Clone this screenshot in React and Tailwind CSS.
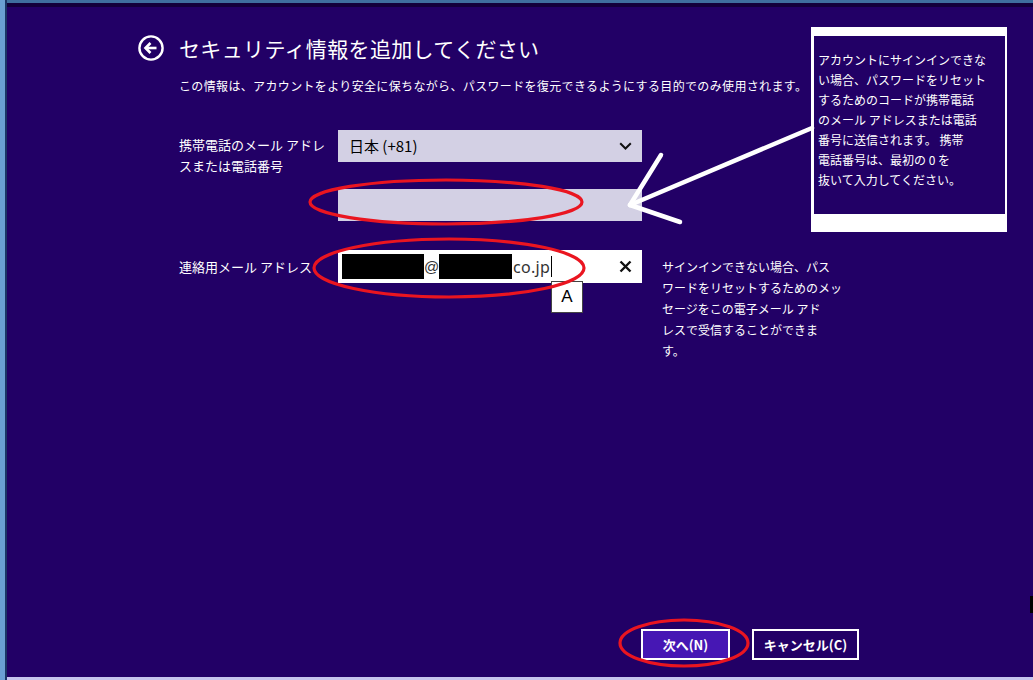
import React from 'react';

const HELP_CALLOUT = [
  'アカウントにサインインできな',
  'い場合、パスワードをリセット',
  'するためのコードが携帯電話',
  'のメール アドレスまたは電話',
  '番号に送信されます。 携帯',
  '電話番号は、最初の 0 を',
  '抜いて入力してください。',
];

const HELP_EMAIL = [
  'サインインできない場合、パス',
  'ワードをリセットするためのメッ',
  'セージをこの電子メール アド',
  'レスで受信することができま',
  'す。',
];

function BackIcon() {
  return (
    <svg width="26" height="26" viewBox="0 0 26 26" fill="none">
      <circle cx="13" cy="13" r="11.6" stroke="white" strokeWidth="2.4" />
      <path d="M7.5 13h11" stroke="white" strokeWidth="2.6" />
      <path d="M12.5 8l-5 5 5 5" stroke="white" strokeWidth="2.6" />
    </svg>
  );
}

function Annotations() {
  return (
    <svg
      className="pointer-events-none absolute left-0 top-0"
      width="1033"
      height="680"
      viewBox="0 0 1033 680"
      fill="none"
    >
      {/* white arrow pointing from the callout to the phone field */}
      <g stroke="white" strokeWidth="4.5" strokeLinecap="round">
        <path d="M812 128 L630 205" />
        <path d="M630 205 L661 155" />
        <path d="M630 205 L680 222" />
      </g>
      {/* red marker circles */}
      <g stroke="#ea1520" strokeWidth="3.2">
        <ellipse cx="446" cy="202" rx="136" ry="22" />
        <ellipse cx="449" cy="268" rx="135" ry="29" />
        <ellipse cx="684" cy="643" rx="64" ry="23" />
      </g>
    </svg>
  );
}

export default function App() {
  return (
    <div className="relative flex h-[680px] w-[1033px] overflow-hidden bg-[#220066] font-['Noto_Sans_CJK_JP','Noto_Sans',sans-serif] text-white">
      {/* window frame, left */}
      <div className="w-[5px] bg-[#6b9fd3]" />
      <div className="w-[2px] bg-[#1b3566]" />

      <div className="flex flex-1 flex-col">
        <div className="h-[3px] bg-[#3f6f9f]" />
        <div className="h-[4px] bg-[#13003b]" />

        <div className="flex flex-1 flex-col">
          {/* title */}
          <div className="mt-[28px] flex items-center gap-[15px] pl-[131px]">
            <BackIcon />
            <h1 className="text-[21px] leading-[26px] tracking-[0.35px]">セキュリティ情報を追加してください</h1>
          </div>

          <div className="flex flex-col pl-[172px]">
            <p className="mt-[17px] text-[12px] leading-[16px] tracking-[0.35px]">
              この情報は、アカウントをより安全に保ちながら、パスワードを復元できるようにする目的でのみ使用されます。
            </p>

            {/* phone row */}
            <div className="mt-[36px] flex">
              <div className="w-[159px] pt-[4px] text-[13px] leading-[21px]">
                携帯電話のメール アドレ
                <br />
                スまたは電話番号
              </div>
              <div className="flex flex-col gap-[27px]">
                <div className="flex h-[32px] w-[304px] items-center justify-between bg-[#d3d0e4] pl-[11px] pr-[10px] text-black">
                  <span className="text-[15px] leading-[20px]">日本 (+81)</span>
                  <svg width="13" height="8" viewBox="0 0 13 8" fill="none">
                    <path d="M1.2 1.2l5.3 5.3 5.3-5.3" stroke="#111" strokeWidth="2" />
                  </svg>
                </div>
                <div className="h-[32px] w-[304px] bg-[#d3d0e4]" />
              </div>
            </div>

            {/* email row */}
            <div className="mt-[29px] flex items-start">
              <div className="w-[159px] pt-[6px] text-[13px] leading-[21px]">連絡用メール アドレス</div>
              <div className="flex h-[33px] w-[304px] items-center bg-white pl-[4px] pr-[10px] text-black">
                <div className="h-[25px] w-[82px] bg-black" />
                <span className="w-[15px] text-center font-['Liberation_Sans',sans-serif] text-[15px] leading-[20px] text-[#333]">@</span>
                <div className="h-[25px] w-[73px] bg-black" />
                <span className="ml-[1px] font-['Noto_Sans',sans-serif] text-[16px] leading-[20px] tracking-[0.3px] text-[#333]">co.jp</span>
                <div className="ml-[1px] h-[21px] w-px bg-black" />
                <svg className="ml-auto" width="13" height="13" viewBox="0 0 13 13" fill="none">
                  <path d="M1.5 1.5l10 10M11.5 1.5l-10 10" stroke="#111" strokeWidth="2.4" />
                </svg>
              </div>
              <div className="ml-[20px] mt-[6px] whitespace-nowrap text-[12px] leading-[21px]">
                {HELP_EMAIL.map((line) => (
                  <div key={line}>{line}</div>
                ))}
              </div>
            </div>
          </div>

          {/* buttons */}
          <div className="mt-auto flex justify-end gap-[22px] pb-[17px] pr-[174px]">
            <button className="h-[31px] w-[89px] border-2 border-white bg-[#4617b4] text-[13px] font-bold leading-[16px]">
              次へ(N)
            </button>
            <button className="h-[31px] w-[107px] border-2 border-white bg-[#220066] text-[13px] font-bold leading-[16px]">
              キャンセル(C)
            </button>
          </div>
        </div>

        <div className="h-[3px] bg-[#c6c4ee]" />
      </div>

      {/* callout box */}
      <div className="absolute left-[811px] top-[27px] h-[205px] w-[196px] border-b-[18px] border-l-[3px] border-r-[2px] border-t-[9px] border-white bg-[#220066] pl-[4px] pt-[14px]">
        <div className="whitespace-nowrap text-[12px] leading-[20px]">
          {HELP_CALLOUT.map((line) => (
            <div key={line}>{line}</div>
          ))}
        </div>
      </div>

      {/* IME mode indicator */}
      <div className="absolute left-[551px] top-[281px] flex h-[32px] w-[32px] items-center justify-center border border-[#444] bg-white font-['Liberation_Sans',sans-serif] text-[17px] text-black">
        A
      </div>

      {/* scroll nub at the right edge */}
      <div className="absolute right-0 top-[596px] h-[17px] w-[3px] bg-black" />

      <Annotations />
    </div>
  );
}
